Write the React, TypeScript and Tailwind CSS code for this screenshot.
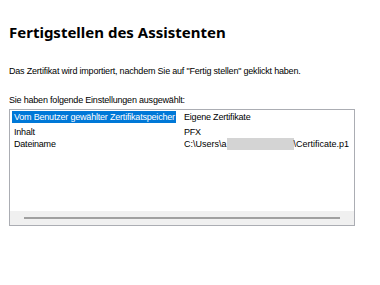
export default function App() {
  return (
    <div className="w-[380px] h-[285px] bg-white overflow-hidden" style={{ fontFamily: '"Liberation Sans", Arial, sans-serif' }}>
      <div className="pl-[9px] pt-[22px]">
        <h1 className="text-[15px] leading-[20px] font-bold text-black" style={{ fontFamily: '"Noto Sans", sans-serif' }}>Fertigstellen des Assistenten</h1>
        <p className="mt-[23px] text-[9px] leading-[12px] tracking-[-0.2px] text-black">Das Zertifikat wird importiert, nachdem Sie auf "Fertig stellen" geklickt haben.</p>
        <p className="mt-[17px] text-[9px] leading-[12px] tracking-[-0.2px] text-black">Sie haben folgende Einstellungen ausgewählt:</p>
        <div className="mt-[3px] w-[346px] h-[117px] border border-[#abadb3] flex flex-col">
          <div className="flex-1 pt-[1px] pl-[2px] text-[9px] leading-[12px] tracking-[-0.2px] text-black whitespace-nowrap">
            <div className="flex">
              <div className="w-[172px]"><span className="inline-block w-[164px] bg-[#0078d7] text-white pl-[2px] overflow-hidden">Vom Benutzer gewählter Zertifikatspeicher</span></div>
              <div>Eigene Zertifikate</div>
            </div>
            <div className="flex">
              <div className="w-[172px] pl-[2px]">Inhalt</div>
              <div>PFX</div>
            </div>
            <div className="flex">
              <div className="w-[172px] pl-[2px]">Dateiname</div>
              <div className="flex items-center tracking-normal overflow-hidden w-[168px]">C:\Users\a<span className="inline-block shrink-0 w-[67px] h-[12px] bg-[#d4d4d4]"></span>\Certificate.p1</div>
            </div>
          </div>
          <div className="h-[14px] bg-[#f0f0f0] flex items-center px-[14px]">
            <div className="h-[2px] w-full bg-[#a0a0a0]"></div>
          </div>
        </div>
      </div>
    </div>
  );
}
